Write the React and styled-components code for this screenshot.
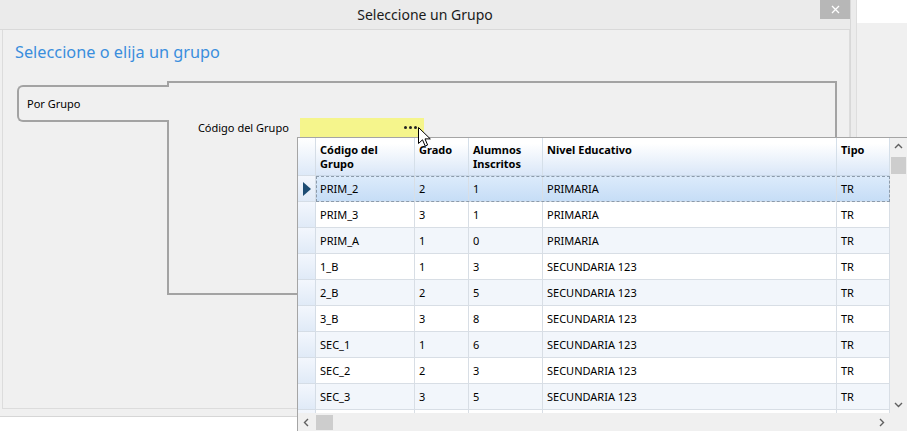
// library imports
import { createGlobalStyle, styled } from "styled-components"

const GlobalStyle = createGlobalStyle`
  html, body {
    margin: 0;
    padding: 0;
    background: #ffffff;
  }
  body {
    font-family: "Noto Sans", "DejaVu Sans", sans-serif;
    font-size: 11px;
    color: #000;
  }
`

// grid data
const columns = [
  { id: 1, label: "Código del\nGrupo" },
  { id: 2, label: "Grado" },
  { id: 3, label: "Alumnos\nInscritos" },
  { id: 4, label: "Nivel Educativo" },
  { id: 5, label: "Tipo" },
]

const rows = [
  ["PRIM_2", "2", "1", "PRIMARIA", "TR"],
  ["PRIM_3", "3", "1", "PRIMARIA", "TR"],
  ["PRIM_A", "1", "0", "PRIMARIA", "TR"],
  ["1_B", "1", "3", "SECUNDARIA 123", "TR"],
  ["2_B", "2", "5", "SECUNDARIA 123", "TR"],
  ["3_B", "3", "8", "SECUNDARIA 123", "TR"],
  ["SEC_1", "1", "6", "SECUNDARIA 123", "TR"],
  ["SEC_2", "2", "3", "SECUNDARIA 123", "TR"],
  ["SEC_3", "3", "5", "SECUNDARIA 123", "TR"],
  ["", "", "", "", ""],
]

const Chevron = ({ dir }) => {
  const d = {
    up: "M1 6 L4.5 2.5 L8 6",
    down: "M1 3 L4.5 6.5 L8 3",
    left: "M6 1 L2.5 4.5 L6 8",
    right: "M3 1 L6.5 4.5 L3 8",
  }[dir]
  return (
    <svg width="9" height="9" viewBox="0 0 9 9">
      <path d={d} fill="none" stroke="#606060" strokeWidth="1.4" />
    </svg>
  )
}

// main component
const App = () => {
  return (
    <>
      <GlobalStyle />
      <Page>
        <Window>
          <TitleBar>
            <span />
            <Title>Seleccione un Grupo</Title>
            <CloseButton>
              <svg width="9" height="9" viewBox="0 0 9 9">
                <path d="M1 1 L8 8 M8 1 L1 8" stroke="#fff" strokeWidth="1.3" />
              </svg>
            </CloseButton>
          </TitleBar>
          <Body>
            <Panel>
              <Heading>Seleccione o elija un grupo</Heading>
              <GroupArea>
                <Tab>Por Grupo</Tab>
                <GroupBox>
                  <Field>
                    <FieldLabel>Código del Grupo</FieldLabel>
                    <Lookup>
                      <Dots>
                        <i /><i /><i />
                      </Dots>
                    </Lookup>
                  </Field>
                </GroupBox>
              </GroupArea>
            </Panel>
          </Body>
        </Window>
        <Edge />
        <Side>
          <SideTop />
        </Side>

        <Cursor>
          <svg width="13" height="20" viewBox="0 0 13 20">
            <path
              d="M0.5 0.5 L0.5 16.5 L4.5 12.8 L7.2 19 L9.6 18 L7 11.9 L12.3 11.9 Z"
              fill="#fff"
              stroke="#000"
              strokeWidth="1"
            />
          </svg>
        </Cursor>

        <Popup>
          <Table>
            <Row $header>
              <RowHead $header />
              {columns.map(col => (
                <HeadCell key={col.id}>{col.label}</HeadCell>
              ))}
            </Row>
            {rows.map((row, i) => (
              <Row key={i} $selected={i === 0}>
                <RowHead>
                  {i === 0 && (
                    <svg width="8" height="14" viewBox="0 0 8 14">
                      <path d="M0 0 L8 7 L0 14 Z" fill="#1d4c73" />
                    </svg>
                  )}
                </RowHead>
                {row.map((value, j) => (
                  <Cell key={j} $alt={i % 2 === 0 && i > 0} $selected={i === 0}>
                    {value}
                  </Cell>
                ))}
              </Row>
            ))}
          </Table>
          <VScroll>
            <ArrowBox><Chevron dir="up" /></ArrowBox>
            <VThumb />
            <Spacer />
            <ArrowBox><Chevron dir="down" /></ArrowBox>
          </VScroll>
          <HScroll>
            <ArrowBox><Chevron dir="left" /></ArrowBox>
            <HThumb />
            <Spacer />
            <ArrowBox><Chevron dir="right" /></ArrowBox>
          </HScroll>
          <Corner />
        </Popup>
      </Page>
    </>
  )
}

const Page = styled.div`
  position: relative;
  width: 907px;
  height: 431px;
  overflow: hidden;
  display: flex;
  align-items: flex-start;
  background: #ffffff;
`

const Window = styled.div`
  width: 850px;
  display: flex;
  flex-direction: column;
`

const TitleBar = styled.div`
  height: 29px;
  display: grid;
  grid-template-columns: 30px 1fr 30px;
  background: #ebebeb;
  border-bottom: 1px solid #d9d9d9;
`

const Title = styled.div`
  text-align: center;
  font-size: 14px;
  line-height: 29px;
  color: #1a1a1a;
`

const CloseButton = styled.div`
  height: 19px;
  background: #b7b7b7;
  display: flex;
  align-items: center;
  justify-content: center;
`

const Body = styled.div`
  background: #f0f0f0;
  padding: 0 0 7px 2px;
  border-bottom: 1px solid #d6d6d6;
`

const Panel = styled.div`
  height: 379px;
  box-sizing: border-box;
  border: 1px solid #dcdcdc;
  border-top: none;
  padding: 10px 12px 0 12px;
`

const Heading = styled.h1`
  margin: 0;
  font-size: 16.3px;
  font-weight: normal;
  line-height: 24px;
  color: #3a8edd;
`

const GroupArea = styled.div`
  display: flex;
  align-items: flex-start;
  margin: 17px 0 0 2px;
`

const Tab = styled.div`
  position: relative;
  z-index: 1;
  width: 152px;
  height: 37px;
  box-sizing: border-box;
  margin-top: 4px;
  margin-right: -2px;
  padding-left: 8px;
  display: flex;
  align-items: center;
  background: #f0f0f0;
  border: 2px solid #a3a3a3;
  border-right: none;
  border-radius: 6px 0 0 6px;
`

const GroupBox = styled.div`
  width: 671px;
  height: 214px;
  box-sizing: border-box;
  border: 2px solid #a3a3a3;
  padding-top: 35px;
`

const Field = styled.div`
  display: flex;
  align-items: center;
  gap: 11px;
`

const FieldLabel = styled.div`
  width: 120px;
  text-align: right;
`

const Lookup = styled.div`
  width: 124px;
  height: 19px;
  background: #f5f58c;
  display: flex;
  align-items: center;
  justify-content: flex-end;
  padding-right: 7px;
  box-sizing: border-box;
`

const Dots = styled.div`
  display: flex;
  gap: 2px;

  i {
    width: 3px;
    height: 3px;
    background: #222;
    border-radius: 50%;
  }
`

const Edge = styled.div`
  width: 5px;
  height: 200px;
  background: #ececec;
  border-left: 1px solid #d8d8d8;
  border-right: 1px solid #dedede;
`

const Side = styled.div`
  flex: 1;
  height: 431px;
  background: #f0f0f0;
`

const SideTop = styled.div`
  height: 23px;
  background: #ffffff;
`

const Cursor = styled.div`
  position: absolute;
  left: 418px;
  top: 127px;
  z-index: 3;
  line-height: 0;
`

const Popup = styled.div`
  position: absolute;
  left: 297px;
  top: 137px;
  width: 610px;
  height: 294px;
  box-sizing: border-box;
  border-top: 1px solid #a5a5a5;
  border-left: 1px solid #a5a5a5;
  background: #ffffff;
  display: grid;
  grid-template-columns: 592px 17px;
  grid-template-rows: 275px 18px;
`

const Table = styled.div`
  overflow: hidden;
  background: #ffffff;
`

const Row = styled.div`
  position: relative;
  display: grid;
  grid-template-columns: 18px 99px 54px 74px 294px 53px;
  height: ${props => (props.$header ? "38px" : "26px")};

  ${props => props.$selected && `
    &::after {
      content: "";
      position: absolute;
      left: 18px;
      right: 0;
      top: 0;
      bottom: 0;
      border: 1px dashed #8c9bab;
      pointer-events: none;
    }
  `}
`

const RowHead = styled.div`
  box-sizing: border-box;
  display: flex;
  align-items: center;
  padding-left: 5px;
  border-right: 1px solid #d5dde6;
  border-bottom: 1px solid #d5dde6;
  background: ${props => props.$header
    ? "linear-gradient(#ffffff, #dde9f8)"
    : "linear-gradient(#f3f7fd, #e0eaf7)"};
`

const HeadCell = styled.div`
  box-sizing: border-box;
  white-space: pre-line;
  font-weight: bold;
  line-height: 14px;
  padding: 5px 0 0 4px;
  border-right: 1px solid #d5dfe9;
  border-bottom: 1px solid #c9d7e6;
  background: linear-gradient(#ffffff 15%, #dae7f8);
`

const Cell = styled.div`
  box-sizing: border-box;
  display: flex;
  align-items: center;
  padding: 0 0 1px 4px;
  border-right: 1px solid #d8dee5;
  border-bottom: 1px solid #d8dee5;
  background: ${props => props.$selected
    ? "linear-gradient(#dcebfb, #c6ddf6)"
    : props.$alt ? "#f2f6fb" : "#ffffff"};
`

const VScroll = styled.div`
  background: #f0f0f0;
  display: flex;
  flex-direction: column;
  align-items: center;
`

const HScroll = styled.div`
  background: #f0f0f0;
  display: flex;
  align-items: center;
`

const ArrowBox = styled.div`
  width: 17px;
  height: 17px;
  flex: none;
  display: flex;
  align-items: center;
  justify-content: center;
`

const VThumb = styled.div`
  width: 15px;
  height: 17px;
  margin-top: 2px;
  background: #cdcdcd;
`

const HThumb = styled.div`
  width: 17px;
  height: 15px;
  margin-left: 1px;
  background: #cdcdcd;
`

const Spacer = styled.div`
  flex: 1;
`

const Corner = styled.div`
  background: #f0f0f0;
`

export default App
